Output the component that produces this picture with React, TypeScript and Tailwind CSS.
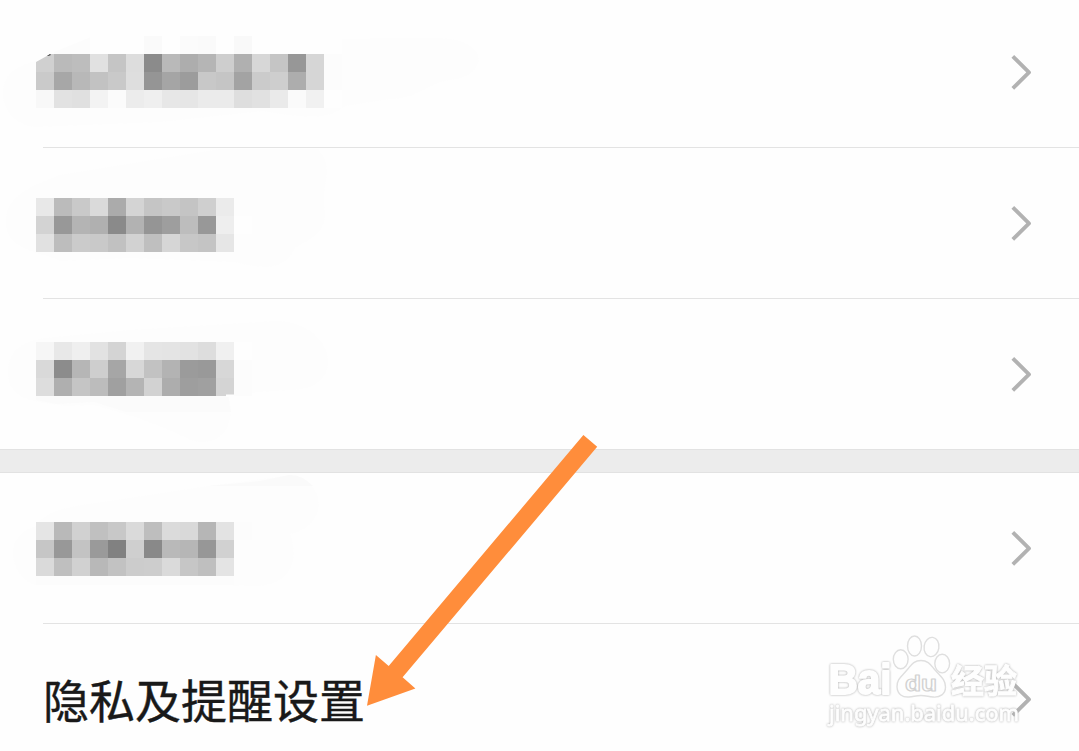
import React from "react";

const FIRST = [
  ["#fefefe", "#fcfcfc", "#fcfcfc", "#fefefe", "#fefefe", "#fefefe", "#fafafa", "#fefefe", "#fbfbfb", "#fafafa", "#fefefe", "#f9f9f9", "#fefefe", "#fefefe", "#fefefe", "#fefefe", "#fefefe"],
  ["#d0d0d0", "#bababa", "#bdbdbd", "#e1e1e1", "#c5c5c5", "#dddddd", "#8b8b8b", "#b9b9b9", "#adadad", "#b5b5b5", "#cecece", "#b0b0b0", "#d7d7d7", "#c5c5c5", "#979797", "#d6d6d6", "#fcfcfc"],
  ["#cacaca", "#a7a7a7", "#b8b8b8", "#c2c2c2", "#c9c9c9", "#dedede", "#959595", "#a5a5a5", "#9c9c9c", "#c8c8c8", "#c5c5c5", "#a3a3a3", "#cbcbcb", "#cecece", "#adadad", "#d6d6d6", "#fcfcfc"],
  ["#f8f8f8", "#e2e2e2", "#e0e0e0", "#f3f3f3", "#fbfbfb", "#ececec", "#efefef", "#e7e7e7", "#e6e6e6", "#ebebeb", "#ebebeb", "#dedede", "#e1e1e1", "#eaeaea", "#fafafa", "#f1f1f1", "#fefefe"],
];

const SECOND = [
  ["#e8e8e8", "#bbbbbb", "#c9c9c9", "#dadada", "#ababab", "#d4d4d4", "#c5c5c5", "#c9c9c9", "#c4c4c4", "#cfcfcf", "#ebebeb", "#fdfdfd"],
  ["#d3d3d3", "#989898", "#b4b4b4", "#b0b0b0", "#8a8a8a", "#b2b2b2", "#959595", "#9e9e9e", "#bdbdbd", "#989898", "#eeeeee", "#fefefe"],
  ["#e1e1e1", "#bdbdbd", "#cbcbcb", "#c9c9c9", "#c1c1c1", "#d2d2d2", "#bfbfbf", "#d6d6d6", "#c7c7c7", "#c4c4c4", "#e6e6e6", "#fdfdfd"],
];

const THIRD = [
  ["#f6f6f6", "#e8e8e8", "#efefef", "#e2e2e2", "#d4d4d4", "#f1f1f1", "#e5e5e5", "#e4e4e4", "#e2e2e2", "#dddddd", "#f0f0f0", "#fefefe"],
  ["#d9d9d9", "#8c8c8c", "#b6b6b6", "#cecece", "#a6a6a6", "#d7d7d7", "#c2c2c2", "#b3b3b3", "#9b9b9b", "#999999", "#d7d7d7", "#fcfcfc"],
  ["#dddddd", "#afafaf", "#c5c5c5", "#bcbcbc", "#a0a0a0", "#b4b4b4", "#d2d2d2", "#adadad", "#9e9e9e", "#a0a0a0", "#d4d4d4", "#fcfcfc"],
];

const FOURTH = [
  ["#e5e5e5", "#b9b9b9", "#d1d1d1", "#c0c0c0", "#c8c8c8", "#dadada", "#bebebe", "#dbdbdb", "#d9d9d9", "#b6b6b6", "#e3e3e3", "#fcfcfc"],
  ["#c6c6c6", "#989898", "#c3c3c3", "#9a9a9a", "#818181", "#cfcfcf", "#898989", "#b9b9b9", "#b6b6b6", "#979797", "#d1d1d1", "#fdfdfd"],
  ["#dadada", "#bfbfbf", "#d1d1d1", "#b8b8b8", "#c2c2c2", "#cccccc", "#cdcdcd", "#dadada", "#c6c6c6", "#bfbfbf", "#e4e4e4", "#fdfdfd"],
];

function Mosaic({ rows }: { rows: string[][] }) {
  return (
    <div className="flex flex-col" aria-hidden="true">
      {rows.map((row, y) => (
        <div key={y} className="flex">
          {row.map((color, x) => (
            <div key={x} className="size-[18px]" style={{ backgroundColor: color }} />
          ))}
        </div>
      ))}
    </div>
  );
}

function Chevron() {
  return (
    <svg className="h-9 w-6 shrink-0" viewBox="0 0 24 36" fill="none">
      <path d="M3.800 2.300 20 18.400 3.800 34.400" stroke="#b2b2b2" strokeWidth="3.800" strokeLinejoin="round" />
    </svg>
  );
}

function Smudge({ className, viewBox, d, fill = "#fdfdfd" }: { className: string; viewBox: string; d: string; fill?: string }) {
  return (
    <svg className={className} viewBox={viewBox} aria-hidden="true">
      <path d={d} fill={fill} />
    </svg>
  );
}

function Arrow() {
  return (
    <svg className="pointer-events-none absolute left-[367px] top-[435px]" width="231" height="272" viewBox="367 435 231 272">
      <path d="M583.4 435 597.2 446.8 402.6 677.3 415.4 688.4 367 705.8 375.9 655 388.7 666Z" fill="#ff8d3b" />
    </svg>
  );
}

function Watermark() {
  return (
    <svg className="pointer-events-none absolute left-[820px] top-[630px]" width="210" height="105" viewBox="820 630 210 105">
      <g fill="#fefefe" stroke="#dfdfdf" strokeWidth="1.4" strokeLinejoin="round">
        <ellipse cx="900.7" cy="659.3" rx="7.4" ry="9.5" />
        <ellipse cx="914.5" cy="646" rx="7" ry="10" />
        <ellipse cx="931.5" cy="647" rx="7.4" ry="9.7" transform="rotate(8 931.5 647)" />
        <ellipse cx="942.2" cy="663.6" rx="7.4" ry="9.3" />
        <path d="M921 660.5c-7.500 0-10 5-14 9.500-5.500 6.500-10.500 9.500-10 17 .5 7.500 5.500 10.500 12 10 5-.5 7.500-1.500 12-1.500s7 1 12 1.500c7 .7 12.500-3 12.500-10 0-7.500-5-10.500-10.500-17-4-4.500-6.500-9.500-14-9.500Z" />
        <text x="905" y="690.5" fontSize="22" fontFamily="'Liberation Sans', sans-serif" fontWeight="700" stroke="#d2d2d2" strokeWidth="1.200" textLength="32" lengthAdjust="spacingAndGlyphs">du</text>
      </g>
      <g fill="#fefefe" stroke="#fefefe" strokeLinejoin="round" className="[filter:drop-shadow(0_0_0.9px_#aaaaaa)]">
        <text x="828.5" y="694" fontSize="42" fontFamily="'Liberation Sans', sans-serif" fontWeight="700" strokeWidth="2" textLength="63" lengthAdjust="spacingAndGlyphs">Bai</text>
        <text x="951" y="692.5" fontSize="33" fontFamily="'Noto Sans CJK SC', sans-serif" fontWeight="700" strokeWidth="1">经验</text>
        <text x="829" y="720.5" fontSize="22" fontFamily="'Noto Sans', sans-serif" fontWeight="400" strokeWidth="0.800" textLength="190" lengthAdjust="spacingAndGlyphs">jingyan.baidu.com</text>
      </g>
    </svg>
  );
}

export default function App() {
  return (
    <main className="relative flex h-[751px] w-[1079px] flex-col overflow-hidden bg-[#fefefe]">
      <Smudge
        className="absolute left-0 top-9 h-[91px] w-[480px]"
        viewBox="0 36 480 91"
        d="M3 94C3 70 20 66 38 60L90 40 430 38C492 36 490 76 450 80 425 84 418 99 390 99L345 106C330 118 315 120 263 111L160 122 35 127C12 124 3 108 3 94Z"
      />

      <section className="flex h-[147px] items-start justify-between pl-9 pr-[46px]">
        <div className="pt-9">
          <div className="relative">
            <Mosaic rows={FIRST} />
            <svg className="absolute left-0 top-0" width="55" height="27" viewBox="0 0 55 27">
              <path d="M0 0h55v1L18 16 0 26Z" fill="#fefefe" />
              <path d="m11 20 3-2 1 1-3 1Z" fill="#333333" />
            </svg>
          </div>
        </div>
        <div className="pt-[54px]"><Chevron /></div>
      </section>
      <div className="ml-[43px] h-px shrink-0 bg-[#e3e3e3]" />

      <section className="relative flex h-[150px] items-start justify-between pl-9 pr-[46px]">
        <Smudge
          className="absolute left-0 top-0 h-[120px] w-[330px]"
          viewBox="0 148 330 120"
          d="M6 222C6 200 20 190 60 175L220 149H318C335 171 322 180 324 205 330 235 306 240 295 248 284 274 255 267 235 262L130 258 60 261C44 252 6 252 6 222Z"
        />
        <div className="relative pt-[50px]"><Mosaic rows={SECOND} /></div>
        <div className="pt-[57px]"><Chevron /></div>
      </section>
      <div className="ml-[43px] h-px shrink-0 bg-[#e3e3e3]" />

      <section className="relative flex h-[150px] items-start justify-between pl-9 pr-[46px]">
        <Smudge
          className="absolute left-0 top-0 h-[150px] w-[330px]"
          viewBox="0 299 330 150"
          d="M8 372C8 348 26 341 45 338L130 330 275 321C306 321 328 340 328 362 328 382 309 390 290 390L227 394C235 412 231 441 202 442 187 442 180 431 125 414L94 405 65 406C34 401 8 401 8 372Z"
        />
        <div className="relative pt-[43px]">
          <Mosaic rows={THIRD} />
          <svg className="absolute left-0 top-[95px]" width="216" height="20" viewBox="0 0 216 20">
            <path d="M0 2h192l3 16H90L58 8 20 10 0 6Z" fill="#fbfbfb" />
            <path d="M190 .5h8V3h-8Z" fill="#fefefe" />
          </svg>
        </div>
        <div className="pt-[57px]"><Chevron /></div>
      </section>
      <div className="h-6 shrink-0 border-y border-[#e2e2e2] bg-[#ececec]" />

      <section className="relative flex h-[150px] items-start justify-between pl-9 pr-[46px]">
        <Smudge
          className="absolute left-0 top-0 h-[120px] w-[330px]"
          viewBox="0 473 330 120"
          d="M13 553C13 538 24 530 36 526 44 511 70 506 110 501L215 485 285 476C323 471 334 525 290 534 303 570 280 586 255 586L190 584 35 585C22 581 13 567 13 553Z"
        />
        <Smudge className="absolute left-[208px] top-0 h-4 w-[110px]" viewBox="208 473 110 16" d="M208 486 260 481 289 475Q301 474 313 486Z" fill="#fafafa" />
        <div className="relative pt-[49px]">
          <Mosaic rows={FOURTH} />
          <div className="h-[9px] w-[198px] bg-[#fcfcfc]" />
        </div>
        <div className="pt-[57px]"><Chevron /></div>
      </section>
      <div className="ml-[43px] h-px shrink-0 bg-[#e3e3e3]" />

      <section className="flex h-[127px] items-start justify-between pl-[43px] pr-[46px]">
        <span className="whitespace-nowrap pt-[51px] font-['Noto_Sans_CJK_SC',sans-serif] text-[46px] leading-[46px] text-[#191919] [-webkit-text-stroke:0.4px_#191919]">
          隐私及提醒设置
        </span>
        <div className="pt-[57px]"><Chevron /></div>
      </section>

      <Watermark />
      <Arrow />
    </main>
  );
}
